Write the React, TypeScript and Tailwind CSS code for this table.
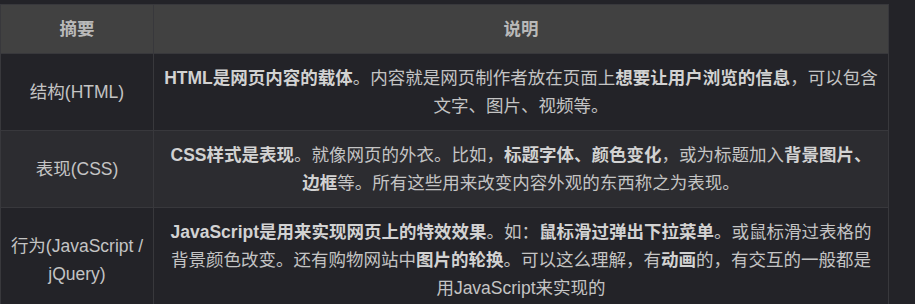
const rows = [
  {
    name: "结构(HTML)",
    bg: "bg-[#232328]",
    lines: [
      <>
        <b>HTML是网页内容的载体</b>。内容就是网页制作者放在页面上<b>想要让用户浏览的信息</b>，可以包含
      </>,
      <>文字、图片、视频等。</>,
    ],
  },
  {
    name: "表现(CSS)",
    bg: "bg-[#2c2c30]",
    lines: [
      <>
        <b>CSS样式是表现</b>。就像网页的外衣。比如，<b>标题字体、颜色变化</b>，或为标题加入<b>背景图片、</b>
      </>,
      <>
        <b>边框</b>等。所有这些用来改变内容外观的东西称之为表现。
      </>,
    ],
  },
  {
    name: "行为(JavaScript / jQuery)",
    bg: "bg-[#232328]",
    lines: [
      <>
        <b>JavaScript是用来实现网页上的特效效果</b>。如：<b>鼠标滑过弹出下拉菜单</b>。或鼠标滑过表格的
      </>,
      <>
        背景颜色改变。还有购物网站中<b>图片的轮换</b>。可以这么理解，有<b>动画</b>的，有交互的一般都是
      </>,
      <>用JavaScript来实现的</>,
    ],
  },
];

export default function App() {
  return (
    <div className="min-h-screen bg-[#232328] pt-1 font-['Liberation_Sans','Noto_Sans_CJK_SC',sans-serif] text-[17.5px] leading-[28px] text-[#c4c4c4]">
      <table className="w-[889px] border-collapse">
        <thead>
          <tr className="bg-[#414141] text-[#b9b9b9]">
            <th className="w-[153px] border border-[#38383c] px-2 py-[10px] font-bold">摘要</th>
            <th className="border border-[#38383c] px-2 py-[10px] font-bold">说明</th>
          </tr>
        </thead>
        <tbody>
          {rows.map((r) => (
            <tr key={r.name} className={r.bg}>
              <td className="border border-[#38383c] px-2 py-[10px] text-center">{r.name}</td>
              <td className="border border-[#38383c] px-2 py-[10px] text-center [&_b]:font-bold [&_b]:text-[#d2d2d2]">
                {r.lines.map((l, i) => (
                  <span key={i}>
                    {l}
                    {i < r.lines.length - 1 && <br />}
                  </span>
                ))}
              </td>
            </tr>
          ))}
        </tbody>
      </table>
    </div>
  );
}
